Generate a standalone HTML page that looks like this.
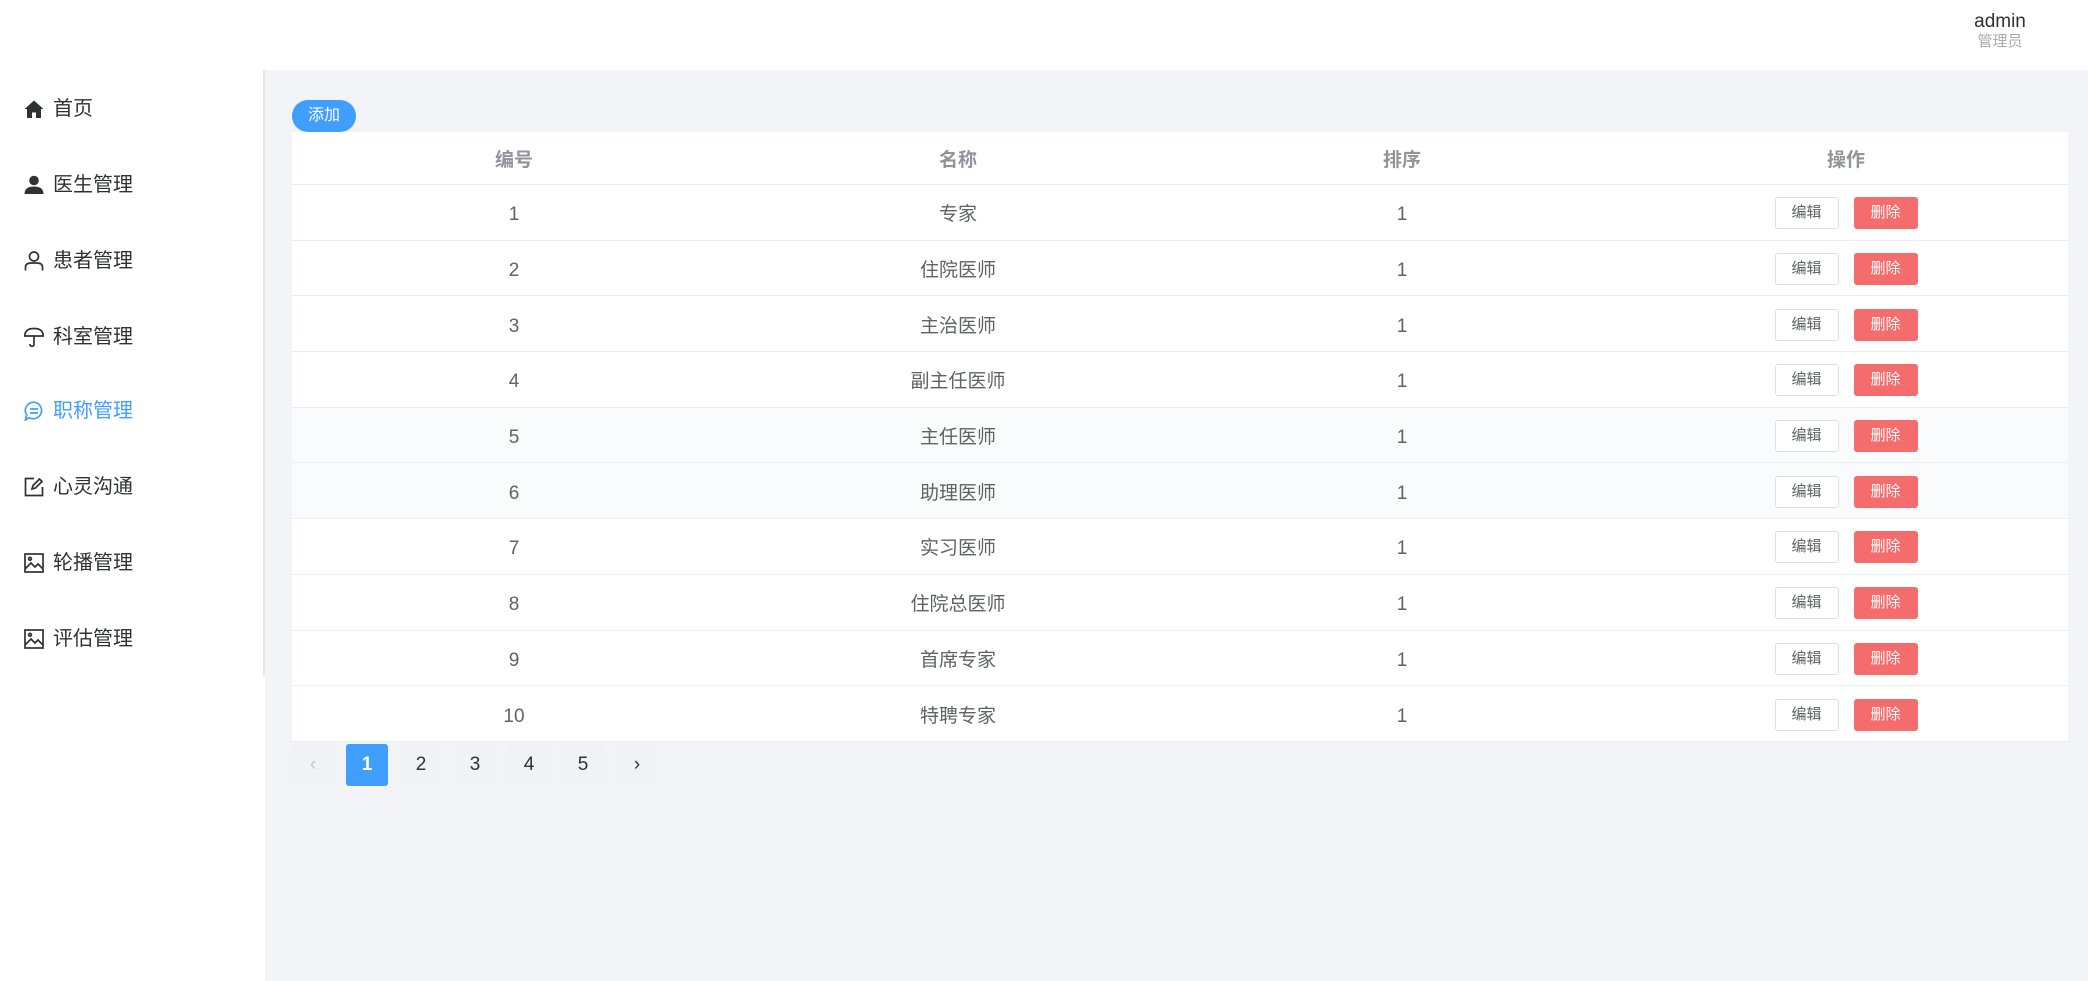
<!DOCTYPE html>
<html><head><meta charset="utf-8"><style>
*{margin:0;padding:0;box-sizing:border-box}
body{width:2088px;height:981px;position:relative;background:#fff;font-family:"Liberation Sans","Noto Sans CJK SC",sans-serif;overflow:hidden}
.gray{position:absolute;left:265px;top:70px;right:0;bottom:0;background:#f3f4f7}
.sideline{position:absolute;left:263px;top:70px;width:2px;height:606px;background:#e6e6e6}
.user{position:absolute;left:1960px;top:11px;width:80px;text-align:center}
.user .n{font-size:19px;color:#303133;line-height:22px}
.user .r{font-size:15px;color:#aaa;line-height:18px}
.menu{position:absolute;left:24px;font-size:20px;color:#303133;height:30px;line-height:30px;display:flex;align-items:center}
.menu svg{width:20px;height:20px;margin-right:9px;flex:none}
.menu.act{color:#409eff}
.add{position:absolute;left:292px;top:100px;width:64px;height:32px;background:#409eff;color:#fff;border-radius:16px;font-size:16px;text-align:center;line-height:32px}
.table{position:absolute;left:292px;top:132px;width:1776px;background:#fff}
.row{display:flex;height:55.7px;border-bottom:1px solid #ebeef5;align-items:center;font-size:19px;color:#606266}
.row.h{height:53px;color:#909399;font-weight:bold}
.row.s{background:#fafbfc}
.row>div{width:444px;text-align:center;line-height:26px;height:26px;position:relative;top:3px}
.row>div:last-child{height:32px;line-height:32px;top:1px}
.row.h>div:last-child{top:3px}
.b{display:inline-block;width:64px;height:32px;line-height:30px;font-size:15px;border-radius:3px;vertical-align:top}
.e{border:1px solid #dcdfe6;color:#606266;background:#fff}
.d{background:#f56c6c;color:#fff;margin-left:15px;border:1px solid #f56c6c}
.pg{position:absolute;top:744px;height:42px;width:42px;background:#f0f2f5;border-radius:3px;text-align:center;line-height:42px;font-size:19px;color:#303133}
.pg.a{background:#409eff;color:#fff;font-weight:bold}
</style></head><body>
<div class="gray"></div>
<div class="sideline"></div>
<div class="user"><div class="n">admin</div><div class="r">管理员</div></div>

<div class="menu" style="top:94px"><svg viewBox="0 0 20 20"><path d="M10 1.5 L0.5 10 L3 10 L3 19 L8 19 L8 13.5 L12 13.5 L12 19 L17 19 L17 10 L19.5 10 Z" fill="#303133"/></svg>首页</div>
<div class="menu" style="top:170px"><svg viewBox="0 0 20 20"><circle cx="10" cy="5.5" r="4.8" fill="#303133"/><path d="M0.5 19 Q0.5 11.5 10 11.5 Q19.5 11.5 19.5 19 Z" fill="#303133"/></svg>医生管理</div>
<div class="menu" style="top:246px"><svg viewBox="0 0 20 20" fill="none" stroke="#303133" stroke-width="1.7"><circle cx="10" cy="5.5" r="4.5"/><path d="M1.5 19.5 V16 Q1.5 12 7.5 12 H12.5 Q18.5 12 18.5 16 V19.5"/></svg>患者管理</div>
<div class="menu" style="top:322px"><svg viewBox="0 0 20 20" fill="none" stroke="#303133" stroke-width="1.7"><path d="M0.8 9 Q0.8 1.5 10 1.5 Q19.2 1.5 19.2 9 Z"/><path d="M10 9 V17 Q10 19.3 8 19.3 Q6 19.3 6 17"/></svg>科室管理</div>
<div class="menu act" style="top:396px"><svg viewBox="0 0 20 20" fill="none" stroke="#409eff" stroke-width="1.7"><path d="M10 1.2 A8.6 8.3 0 1 1 5 16.8 L1.5 18.8 L2.7 14 A8.6 8.3 0 0 1 10 1.2 Z"/><path d="M6 8 H14 M6 12 H14"/></svg>职称管理</div>
<div class="menu" style="top:472px"><svg viewBox="0 0 20 20" fill="none" stroke="#303133" stroke-width="1.7"><path d="M10 1.5 H1.5 V18.5 H18.5 V10"/><path d="M8 12 L9 8.5 L15.5 2 L18 4.5 L11.5 11 Z"/></svg>心灵沟通</div>
<div class="menu" style="top:548px"><svg viewBox="0 0 20 20" fill="none" stroke="#303133" stroke-width="1.7"><rect x="1" y="1" width="18" height="18"/><path d="M1.5 15.5 L7 10 L11 14 L14 11 L18.5 15.5"/><circle cx="6" cy="5.8" r="1.4"/></svg>轮播管理</div>
<div class="menu" style="top:624px"><svg viewBox="0 0 20 20" fill="none" stroke="#303133" stroke-width="1.7"><rect x="1" y="1" width="18" height="18"/><path d="M1.5 15.5 L7 10 L11 14 L14 11 L18.5 15.5"/><circle cx="6" cy="5.8" r="1.4"/></svg>评估管理</div>

<div class="add">添加</div>
<div class="table">
<div class="row h"><div>编号</div><div>名称</div><div>排序</div><div>操作</div></div>
<div class="row"><div>1</div><div>专家</div><div>1</div><div><span class="b e">编辑</span><span class="b d">删除</span></div></div>
<div class="row"><div>2</div><div>住院医师</div><div>1</div><div><span class="b e">编辑</span><span class="b d">删除</span></div></div>
<div class="row"><div>3</div><div>主治医师</div><div>1</div><div><span class="b e">编辑</span><span class="b d">删除</span></div></div>
<div class="row"><div>4</div><div>副主任医师</div><div>1</div><div><span class="b e">编辑</span><span class="b d">删除</span></div></div>
<div class="row s"><div>5</div><div>主任医师</div><div>1</div><div><span class="b e">编辑</span><span class="b d">删除</span></div></div>
<div class="row s"><div>6</div><div>助理医师</div><div>1</div><div><span class="b e">编辑</span><span class="b d">删除</span></div></div>
<div class="row"><div>7</div><div>实习医师</div><div>1</div><div><span class="b e">编辑</span><span class="b d">删除</span></div></div>
<div class="row"><div>8</div><div>住院总医师</div><div>1</div><div><span class="b e">编辑</span><span class="b d">删除</span></div></div>
<div class="row"><div>9</div><div>首席专家</div><div>1</div><div><span class="b e">编辑</span><span class="b d">删除</span></div></div>
<div class="row"><div>10</div><div>特聘专家</div><div>1</div><div><span class="b e">编辑</span><span class="b d">删除</span></div></div>
</div>
<div class="pg" style="left:292px;color:#c0c4cc">‹</div>
<div class="pg a" style="left:346px">1</div>
<div class="pg" style="left:400px">2</div>
<div class="pg" style="left:454px">3</div>
<div class="pg" style="left:508px">4</div>
<div class="pg" style="left:562px">5</div>
<div class="pg" style="left:616px">›</div>
</body></html>
